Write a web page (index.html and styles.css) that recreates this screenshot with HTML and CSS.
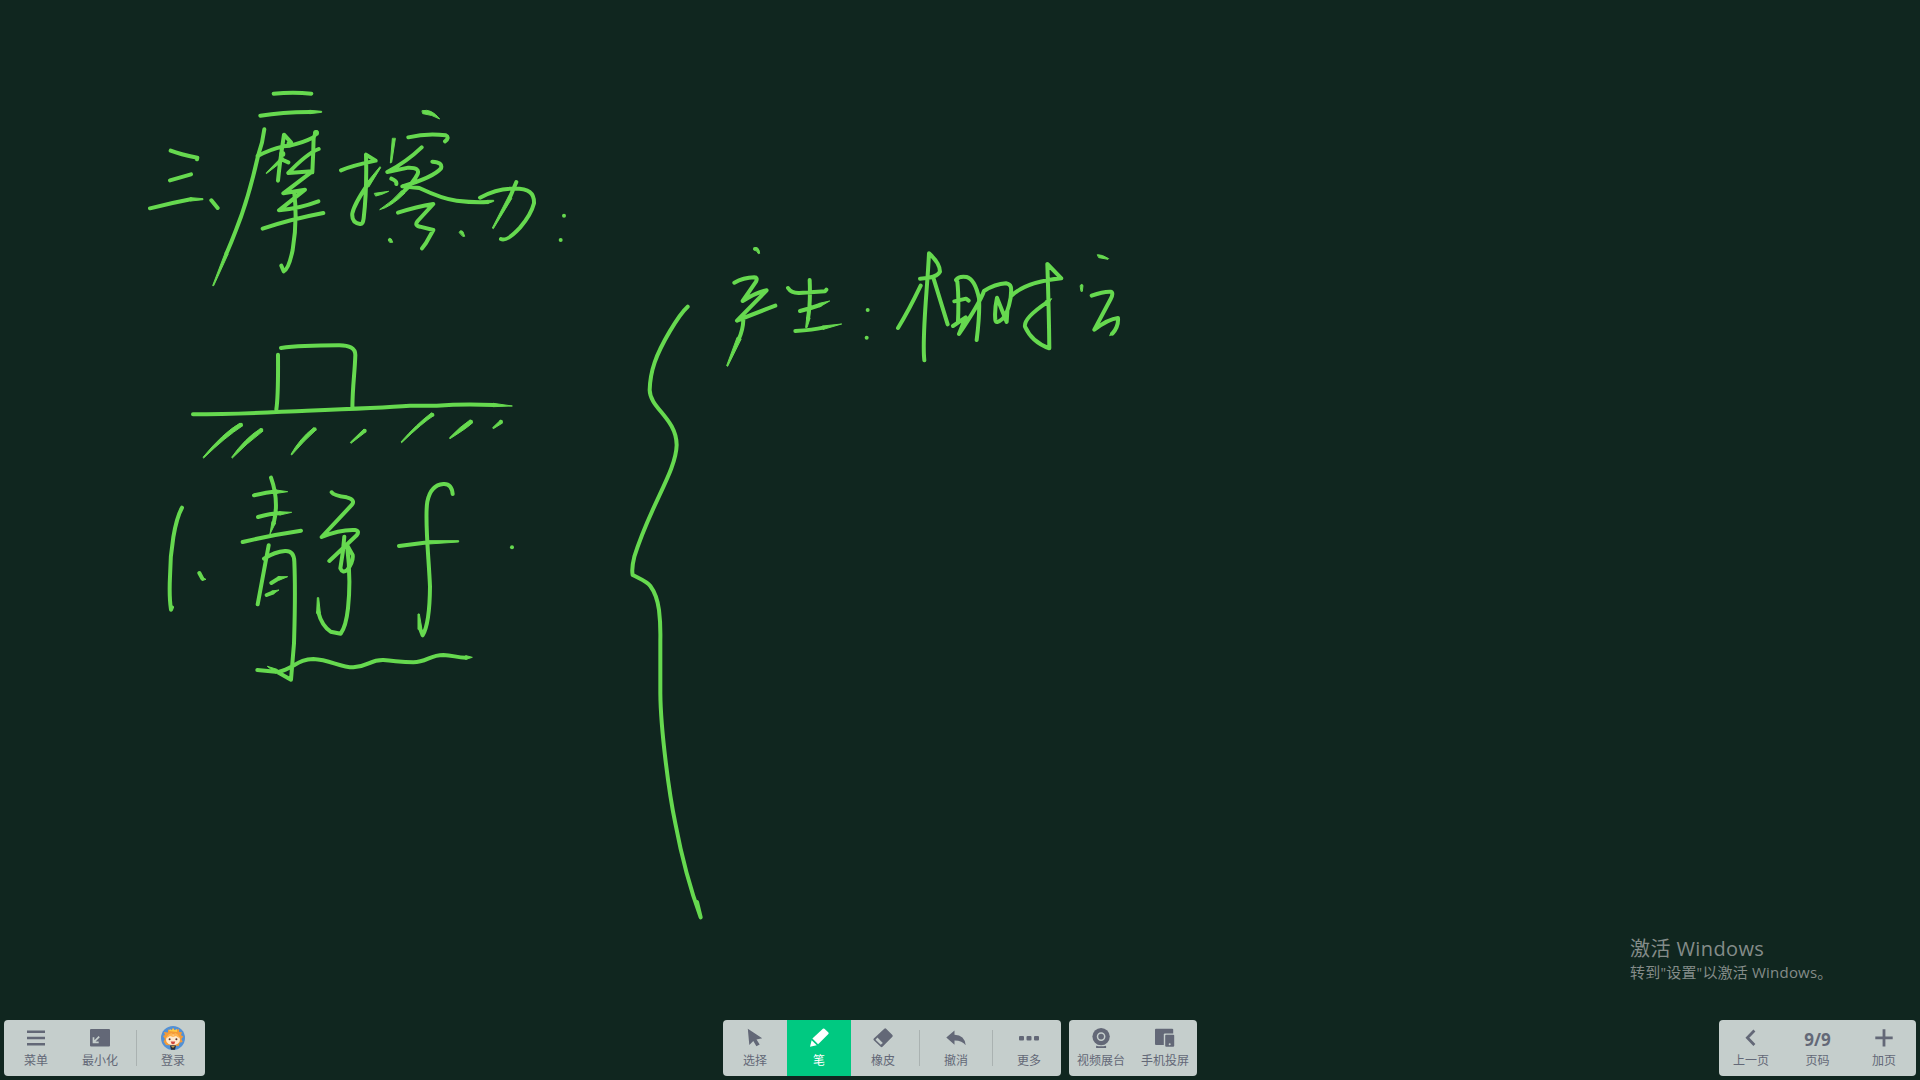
FILE: index.html
```html
<!DOCTYPE html>
<html lang="zh-CN">
<head>
<meta charset="utf-8">
<title>白板</title>
<link rel="stylesheet" href="styles.css">
</head>
<body>
<main class="board">
  <svg class="ink" viewBox="0 0 1920 1080" aria-hidden="true">
    <!-- 三、摩 -->
    <g transform="translate(130 80) scale(.33333)">
      <path d="M431 41Q490 36 544 41M391 107Q455 97 540 96M122 212Q150 223 202 233L201 238M120 301L183 283M60 385Q125 369 182 358M244 361L263 384"/>
      <path d="M403 148Q398 190 384 228C368 300 340 395 318 450Q304 487 290 519"/>
      <path d="M383 228Q420 208 460 199M444 302Q449 250 462 164L483 187M480 197Q520 188 551 172L559 156M551 172Q550 220 547 277M566 207Q530 221 475 279L547 274L460 340L525 329L447 391Q510 385 565 364M398 446Q480 418 580 399M493 340C500 400 498 450 488 510Q476 568 461 574L454 557M460 199L480 197M452 237L475 247"/>
      <g class="taper">
        <path d="M540 91L575 94V97L540 101ZM182 353L219 356V359L182 363ZM286 517L248 617H251L294 523ZM456 230L409 278V281L462 240Z"/>
      </g>
      <circle cx="558" cy="159" r="9"/><circle cx="478" cy="190" r="8"/><circle cx="457" cy="222" r="9"/>
    </g>
    <!-- 擦力： -->
    <g transform="translate(330 90) scale(.33333)">
      <path d="M235 142Q290 129 347 136Q360 143 345 154M33 241Q70 226 137 212L108 194Q111 300 101 385Q99 404 90 402Q64 398 67 370Q73 342 112 285M275 172Q230 215 172 246L235 233Q270 232 263 252Q250 278 219 307M307 215Q339 217 333 235Q310 262 217 289L268 294Q340 328 380 332Q430 338 472 336M204 368Q260 350 310 342L263 393Q252 407 270 410L310 420L288 459L276 475M450 323Q500 296 545 296C600 294 613 311 612 340Q603 375 570 413Q530 456 513 447M559 276L540 322M184 266Q201 273 199 282"/>
      <g class="taper">
        <path d="M277 62Q305 55 329 87Q307 74 279 71ZM187 146L181 219L185 217L196 146ZM107 282L150 230L152 233L117 290ZM214 303Q190 332 149 359Q183 351 224 310ZM134 310L176 304Q155 315 138 318ZM472 331L491 331V334L472 341ZM536 318L487 414L490 416L545 326ZM388 427Q390 418 399 425L404 439H399ZM175 449Q176 442 184 447L188 457L180 457Z"/>
      </g>
      <circle cx="702" cy="377" r="6"/><circle cx="692" cy="450" r="6"/>
    </g>
    <!-- 木块与地面 -->
    <g transform="translate(160 320) scale(.33333)">
      <path d="M354 104Q355 230 349 268M363 84Q420 76 535 76Q586 75 586 105C584 165 578 190 577 266M99 283C240 283 340 276 440 272S680 262 750 257H830Q910 251 1000 255"/>
      <g class="taper">
        <path d="M1000 250L1057 258L1000 260ZM239 310Q190 338 129 412L131 414Q195 352 247 318ZM301 326Q255 355 215 412L217 414Q260 370 308 334ZM460 324Q420 355 393 403L395 405Q434 360 467 331ZM611 328L571 367L573 370L617 336ZM814 279Q770 312 723 366L725 368Q790 306 821 287ZM930 300Q900 320 868 354L870 356Q920 325 937 309ZM1021 301L998 323L1000 326L1026 310Z"/>
      </g>
      <circle cx="243" cy="314" r="6"/><circle cx="304" cy="330" r="6"/><circle cx="464" cy="328" r="6"/><circle cx="614" cy="332" r="6"/><circle cx="817" cy="284" r="6"/><circle cx="933" cy="305" r="6"/><circle cx="1023" cy="305" r="6"/>
    </g>
    <!-- 1. 静 f -->
    <g transform="translate(150 460) scale(.33333)">
      <path d="M96 143C75 180 60 270 60 350Q57 410 63 449L66 442M148 339L157 356M363 53C380 100 381 150 371 190M312 106Q350 96 380 95M324 171Q360 161 390 160M278 246Q370 224 453 212M356 256Q342 330 323 433M342 296Q375 275 405 273Q432 271 433 305C437 400 434 480 432 550L423 659L378 634M364 369L388 354M350 405L368 398M545 97Q551 107 590 112Q617 119 606 134L515 231Q570 208 615 210Q630 213 620 226L538 303M583 230Q580 275 571 325Q577 340 591 331Q611 305 608 285L591 255C598 310 601 380 594 445Q588 500 572 521L542 515Q515 497 505 457M908 102Q905 70 880 72Q842 75 832 125C823 175 837 300 840 380Q839 490 818 526L810 505M747 258L835 247M322 630L385 636C430 626 445 597 490 597C540 599 570 622 610 622C655 619 660 599 700 600C740 603 755 607 790 607C830 606 840 585 880 585C910 586 920 593 948 593"/>
      <g class="taper">
        <path d="M154 352L168 358L158 361ZM366 185L360 222L376 190ZM378 90L413 95L380 100ZM388 155L425 157L390 165ZM835 242L926 242V246L835 252ZM385 350L413 350L389 360ZM366 393L387 390L369 402ZM381 628L352 619L377 639ZM500 459L502 413H506L511 459ZM804 507V462H808L815 503ZM948 587L967 592L948 598Z"/>
      </g>
      <circle cx="1086" cy="262" r="6"/>
    </g>
    <!-- 大括号 -->
    <g transform="translate(600 290) scale(.33333)">
      <path d="M263 50C235 75 182 165 164 217Q150 258 149 300C150 355 229 385 230 465C228 545 151 645 103 800Q94 835 98 855C125 869 140 873 151 888Q171 915 177 960Q182 1000 181 1050V1210C182 1320 207 1510 226 1600Q255 1754 302 1882L291 1836"/>
    </g>
    <!-- 产生： -->
    <g transform="translate(710 230) scale(.33333)">
      <path d="M73 158Q100 143 133 142Q144 142 138 155L98 213Q143 185 170 181L81 272Q135 250 196 227M100 270Q99 300 86 328M234 174Q244 190 268 189L345 184L349 179M299 150Q302 220 294 265M270 243Q305 234 330 225M256 303Q310 300 340 293"/>
      <g class="taper">
        <path d="M81 323L50 407L53 409L93 328ZM290 264L287 293H291L300 265ZM328 220L359 213L330 230ZM338 288L395 282L340 298ZM132 53Q147 48 149 70L145 71Q142 61 132 60Z"/>
      </g>
      <circle cx="473" cy="240" r="6"/><circle cx="470" cy="323" r="6"/>
    </g>
    <!-- 相对运 -->
    <g transform="translate(890 230) scale(.33333)">
      <path d="M24 294Q55 244 92 167M103 391C95 320 112 180 117 70Q150 100 150 125Q141 144 90 146M129 140L173 283M202 155L198 150Q207 137 230 141Q255 148 267 205Q270 250 260 330M202 155Q207 200 204 275M193 214L228 206L236 212M189 288L227 262L207 312Q270 218 282 183Q315 162 348 160C369 164 363 180 362 203Q353 253 337 267Q318 283 316 270Q313 240 321 203L350 276L352 244M366 196Q410 155 514 145L472 102Q477 250 478 355Q426 337 405 290C401 270 430 245 470 218M605 197Q640 184 662 185Q672 188 662 207L613 299Q655 267 684 264Q686 290 667 311"/>
      <g class="taper">
        <path d="M466 213L485 206L475 222ZM623 74Q636 73 656 86L654 88L627 83ZM571 166Q575 160 579 166L577 184H574ZM663 308L659 317L672 310Z"/>
      </g>
    </g>
  </svg>

  <aside class="activation">
    <p class="activation-title">激活 Windows</p>
    <p class="activation-text">转到<span class="quote">"</span>设置<span class="quote">"</span>以激活 Windows。</p>
  </aside>

  <footer class="toolbars">
    <nav class="bar">
      <button class="tool"><svg class="icon" viewBox="0 0 24 24"><path d="M3 3.8h18M3 10h18M3 16.2h18" fill="none" stroke="currentColor" stroke-width="2.6"/></svg><span>菜单</span></button>
      <button class="tool"><svg class="icon" viewBox="0 0 24 24"><rect x="2" y="1" width="20" height="17.5" rx="1"/><path d="M11.2 8.7L5.7 14.2M5.5 9.3v5.1h5.2" fill="none" stroke="#c5cecc" stroke-width="1.7"/></svg><span>最小化</span></button>
      <i class="divider"></i>
      <button class="tool">
        <svg class="icon avatar" viewBox="0 0 24 24"><circle cx="12" cy="12" r="12" fill="#5290d5"/><path d="M5 19L2.6 15.5 4 13 2 10l2-1-1-3 4 .4L7 3.5l3 1L12 2l2 2.5L18 3v3l3 .2-1 3 2.4 1.3-2 2.5 1.3 3-3 .7-1 3.2z" fill="#f39b38"/><path d="M8 5l1-2 2 1.5L12 2l1.4 2.3L16 3v3z" fill="#ffcb42"/><ellipse cx="12" cy="13.8" rx="7" ry="5.3" fill="#ffe9ce"/><path d="M6 12q0-4 5-5l1 3 2-3q4 1 4 5l-3-2-3 1-3-1z" fill="#ffb451"/><circle cx="8.6" cy="13.3" r="1" fill="#59332a"/><circle cx="15.4" cy="13.3" r="1" fill="#59332a"/><path d="M9.7 15.4h4.6q-.5 2.8-2.3 2.8t-2.3-2.8z" fill="#d3473c"/><path d="M9 19.5h6l-1 4.3h-4z" fill="#292d35"/><path d="M10 20h4l-2 2z" fill="#c3994b"/></svg>
        <span>登录</span></button>
    </nav>
    <nav class="bar bar-center">
      <button class="tool"><svg class="icon" viewBox="0 0 24 24"><path d="M4.8.8l14.4 9.5-5.7 1.1 3.2 5-3.3 1.8-3.1-5.2-4 4.1z"/></svg><span>选择</span></button>
      <button class="tool tool-active"><svg class="icon" viewBox="0 0 24 24"><path d="M15.9.7q.8-.5 1.5.1l4 3.8q.6.7 0 1.4L11.1 16.2 5.4 10.6z"/><path d="M4.6 12.2l5.2 5-6.8 1.6z"/></svg><span>笔</span></button>
      <button class="tool"><svg class="icon" viewBox="0 0 24 24"><path d="M13.3.8q.9-.9 1.8 0l6.3 6.1q.8.9 0 1.8L11.5 18.7q-.9.9-1.8 0l-6.9-6.4q-.8-.9 0-1.8z"/><path d="M6.4 9.6l5.4 5.3-2 1.9-5.3-5.1z" fill="#c5cecc"/></svg><span>橡皮</span></button>
      <i class="divider"></i>
      <button class="tool"><svg class="icon" viewBox="0 0 24 24"><path d="M10.5 2.6v4.1q10.2.2 11.2 10.5Q18.1 12.4 10.5 12.5v4.2L2.3 9.6z"/></svg><span>撤消</span></button>
      <i class="divider"></i>
      <button class="tool"><svg class="icon" viewBox="0 0 24 24"><rect x="2" y="8" width="5" height="4.5" rx="1"/><rect x="9.5" y="8" width="5" height="4.5" rx="1"/><rect x="17" y="8" width="5" height="4.5" rx="1"/></svg><span>更多</span></button>
    </nav>
    <nav class="bar bar-media">
      <button class="tool"><svg class="icon" viewBox="0 0 24 24"><circle cx="12.1" cy="8.6" r="8.7"/><circle cx="12.1" cy="8.6" r="3.6" fill="none" stroke="#c5cecc" stroke-width="1.5"/><path d="M7.1 17.7q5 1.2 10 0v2.2h-10z"/></svg><span>视频展台</span></button>
      <button class="tool"><svg class="icon" viewBox="0 0 24 24"><rect x="2" y=".7" width="18.2" height="16.3" rx="1"/><rect x="10.8" y="5.5" width="11.8" height="15" rx="1" fill="#c5cecc"/><rect x="12.2" y="6.7" width="9" height="12" rx="1"/><circle cx="16.7" cy="16.2" r="1" fill="#c5cecc"/></svg><span>手机投屏</span></button>
    </nav>
    <nav class="bar bar-pages">
      <button class="tool"><svg class="icon" viewBox="0 0 24 24"><path d="M15.4 2.6L8.4 9.8l7 7.2" fill="none" stroke="currentColor" stroke-width="2.8"/></svg><span>上一页</span></button>
      <button class="tool tool-page"><b class="page-number">9/9</b><span>页码</span></button>
      <button class="tool"><svg class="icon" viewBox="0 0 24 24"><path d="M3.3 9.8h17.4M12 1.2v17.2" fill="none" stroke="currentColor" stroke-width="2.8"/></svg><span>加页</span></button>
    </nav>
  </footer>
</main>
</body>
</html>
```
FILE: styles.css
```css
* { box-sizing: border-box; }

body {
  margin: 0;
  background: #10261f;
  font-family: "Open Sans", "Noto Sans CJK SC", sans-serif;
}

.board {
  position: relative;
  display: flex;
  flex-direction: column;
  justify-content: flex-end;
  height: 100vh;
  overflow: hidden;
}

.ink {
  position: absolute;
  inset: 0;
  width: 1920px;
  height: 1080px;
}

.ink path {
  fill: none;
  stroke: #66d94f;
  stroke-width: 12;
  stroke-linecap: round;
  stroke-linejoin: round;
}

.ink .taper path {
  fill: #66d94f;
  stroke-width: 3;
}

.ink circle { fill: #66d94f; }

.activation {
  align-self: flex-end;
  width: 290px;
  margin-bottom: 38px;
  color: #848c89;
  white-space: nowrap;
}

.activation p { margin: 0; }

.activation-title {
  font-size: 20px;
  line-height: 28px;
  letter-spacing: .4px;
}

.activation-text {
  font-size: 15px;
  line-height: 19px;
  letter-spacing: .2px;
}

.quote { font-size: 14px; }

.toolbars {
  display: flex;
  height: 60px;
  padding: 0 4px 4px;
}

.bar {
  display: flex;
  height: 56px;
  border-radius: 4px;
  overflow: hidden;
  background: #c5cecc;
}

.bar-center { margin-left: 518px; }
.bar-media { margin-left: 8px; }
.bar-pages { margin-left: auto; }

.tool {
  display: flex;
  flex-direction: column;
  align-items: center;
  width: 64px;
  height: 56px;
  padding: 8px 0 0;
  border: 0;
  background: none;
  color: #636877;
  font-family: "Noto Sans CJK SC", sans-serif;
  font-size: 12px;
  line-height: 16px;
  white-space: nowrap;
}

.tool-page { width: 69px; }

.tool-active {
  background: #00c981;
  color: #fff;
}

.icon {
  display: block;
  width: 24px;
  height: 24px;
  fill: currentColor;
  overflow: visible;
}

.avatar { transform: translateY(-2px); }

.page-number {
  height: 24px;
  font-family: "Open Sans", sans-serif;
  font-size: 17px;
  line-height: 23px;
}

.divider {
  width: 1px;
  height: 36px;
  margin: 10px 4px;
  background: #aab2b1;
}
```
